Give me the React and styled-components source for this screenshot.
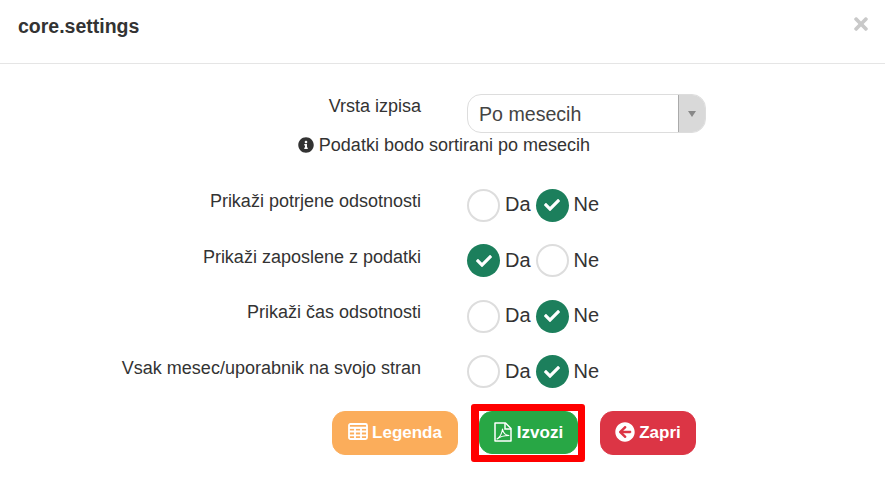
import React from "react";
import styled, { createGlobalStyle } from "styled-components";
import { FaArrowCircleLeft, FaCheck, FaInfoCircle, FaTimes } from "react-icons/fa";

const GlobalStyle = createGlobalStyle`
  html, body {
    margin: 0;
    padding: 0;
    background: #fff;
  }
  body {
    font-family: "Liberation Sans", Arial, sans-serif;
    color: #333;
  }
`;

const Modal = styled.div`
  width: 885px;
  height: 501px;
  overflow: hidden;
  background: #fff;
`;

const Header = styled.header`
  height: 63px;
  padding: 0 14px 0 18px;
  display: flex;
  justify-content: space-between;
  align-items: flex-start;
  border-bottom: 1px solid #e5e5e5;
`;

const Title = styled.h4`
  margin: 16px 0 0;
  font-size: 19.5px;
  line-height: 21px;
  font-weight: 700;
  color: #333;
`;

const Close = styled.button`
  margin-top: 14px;
  padding: 0;
  border: 0;
  background: none;
  color: #c9c9c9;
  font-size: 20px;
  line-height: 1;
  display: flex;
`;

const Body = styled.div`
  padding-top: 30px;
`;

const Row = styled.div`
  display: grid;
  grid-template-columns: 421px 1fr;
  column-gap: 46px;
  height: ${({ $height }) => $height || 56}px;
`;

const Label = styled.label`
  text-align: right;
  font-size: 18px;
  line-height: 20px;
  padding-top: ${({ $top }) => $top || 0}px;
  color: #333;
`;

const Select = styled.div`
  width: 239px;
  height: 39px;
  box-sizing: border-box;
  display: flex;
  border: 1px solid #ddd;
  border-radius: 14px;
  overflow: hidden;
`;

const SelectValue = styled.span`
  flex: 1;
  padding-left: 11px;
  font-size: 19.6px;
  line-height: 38px;
  color: #444;
`;

const SelectArrow = styled.span`
  width: 26px;
  background: #d9d9d9;
  border-left: 1px solid #aaa;
  display: flex;
  align-items: center;
  justify-content: center;

  &::after {
    content: "";
    border-style: solid;
    border-width: 6px 4px 0;
    border-color: #888 transparent transparent;
  }
`;

const Help = styled.div`
  height: 54px;
  padding-right: 295px;
  display: flex;
  justify-content: flex-end;
  align-items: flex-start;
  gap: 5px;
  font-size: 18px;
  line-height: 24px;
  color: #333;

  svg {
    margin-top: 4px;
    font-size: 16px;
  }
`;

const Options = styled.div`
  display: flex;
  align-items: center;
  height: 34px;
  margin-top: 1px;
`;

const Radio = styled.span`
  width: 33px;
  height: 33px;
  box-sizing: border-box;
  border-radius: 50%;
  border: ${({ $on }) => ($on ? "0" : "2px solid #ddd")};
  background: ${({ $on }) => ($on ? "#1c7f5c" : "#fff")};
  color: #fff;
  font-size: 16px;
  display: flex;
  align-items: center;
  justify-content: center;
`;

const OptionText = styled.span`
  font-size: 20px;
  line-height: 24px;
  margin: -2px ${({ $last }) => ($last ? 0 : 5)}px 0 5px;
  color: #333;
`;

const Footer = styled.div`
  display: flex;
  align-items: center;
  padding-left: 332px;
  margin-top: -6px;
`;

const Highlight = styled.div`
  margin: 0 15px 0 13px;
  width: 114px;
  height: 58px;
  box-sizing: border-box;
  border: 7px solid #f00;
  border-left-width: 8px;
  border-radius: 3px;
  display: flex;
  align-items: center;
`;

const Button = styled.button`
  width: ${({ $width }) => $width}px;
  height: ${({ $height }) => $height || 44}px;
  padding: 0;
  border: 1px solid ${({ $color }) => $color};
  border-radius: 13px;
  background: ${({ $color }) => $color};
  color: #fff;
  font-family: inherit;
  font-size: 17px;
  font-weight: 700;
  display: flex;
  align-items: center;
  justify-content: center;
  gap: ${({ $gap }) => $gap || 4}px;

  svg {
    font-size: 20px;
    margin-bottom: 2px;
  }
`;

const TableIcon = () => (
  <svg width="20" height="17" viewBox="0 0 20 17" fill="none" stroke="currentColor" strokeWidth="1.8">
    <rect x="1" y="1" width="18" height="15" rx="1.5" />
    <path d="M1 4.8h18" strokeWidth="2.2" />
    <path d="M1 8.5h18M1 12.3h18M7 4v12M13 4v12" />
  </svg>
);

const PdfIcon = () => (
  <svg width="18" height="20" viewBox="0 0 18 20" fill="none" stroke="currentColor" strokeWidth="1.5">
    <path d="M1 1h10.5L17 6.5V19H1z" strokeLinejoin="round" />
    <path d="M11 1v6h6" />
    <path d="M3 17c3-2 5-6 5.5-10 .5 3.5 2.5 6 6.5 6.5-4.5 0-9 1-12 3.5z" strokeWidth="1.1" strokeLinejoin="round" />
  </svg>
);

const rows = [
  { label: "Prikaži potrjene odsotnosti", value: "ne" },
  { label: "Prikaži zaposlene z podatki", value: "da" },
  { label: "Prikaži čas odsotnosti", value: "ne" },
  { label: "Vsak mesec/uporabnik na svojo stran", value: "ne" },
];

const App = () => {
  return (
    <Modal>
      <GlobalStyle />
      <Header>
        <Title>core.settings</Title>
        <Close aria-label="Zapri">
          <FaTimes />
        </Close>
      </Header>
      <Body>
        <Row $height={39}>
          <Label $top={2}>Vrsta izpisa</Label>
          <Select>
            <SelectValue>Po mesecih</SelectValue>
            <SelectArrow />
          </Select>
        </Row>
        <Help>
          <FaInfoCircle />
          Podatki bodo sortirani po mesecih
        </Help>
        {rows.map((row) => (
          <Row key={row.label} $height={55.67}>
            <Label $top={4}>{row.label}</Label>
            <Options>
              <Radio $on={row.value === "da"}>{row.value === "da" && <FaCheck />}</Radio>
              <OptionText>Da</OptionText>
              <Radio $on={row.value === "ne"}>{row.value === "ne" && <FaCheck />}</Radio>
              <OptionText $last>Ne</OptionText>
            </Options>
          </Row>
        ))}
        <Footer>
          <Button $width={126} $color="#fbad5b">
            <TableIcon />
            Legenda
          </Button>
          <Highlight>
            <Button $width={99} $height={43} $gap={5} $color="#28a745">
              <PdfIcon />
              Izvozi
            </Button>
          </Highlight>
          <Button $width={96} $color="#dc3545">
            <FaArrowCircleLeft />
            Zapri
          </Button>
        </Footer>
      </Body>
    </Modal>
  );
};

export default App;
